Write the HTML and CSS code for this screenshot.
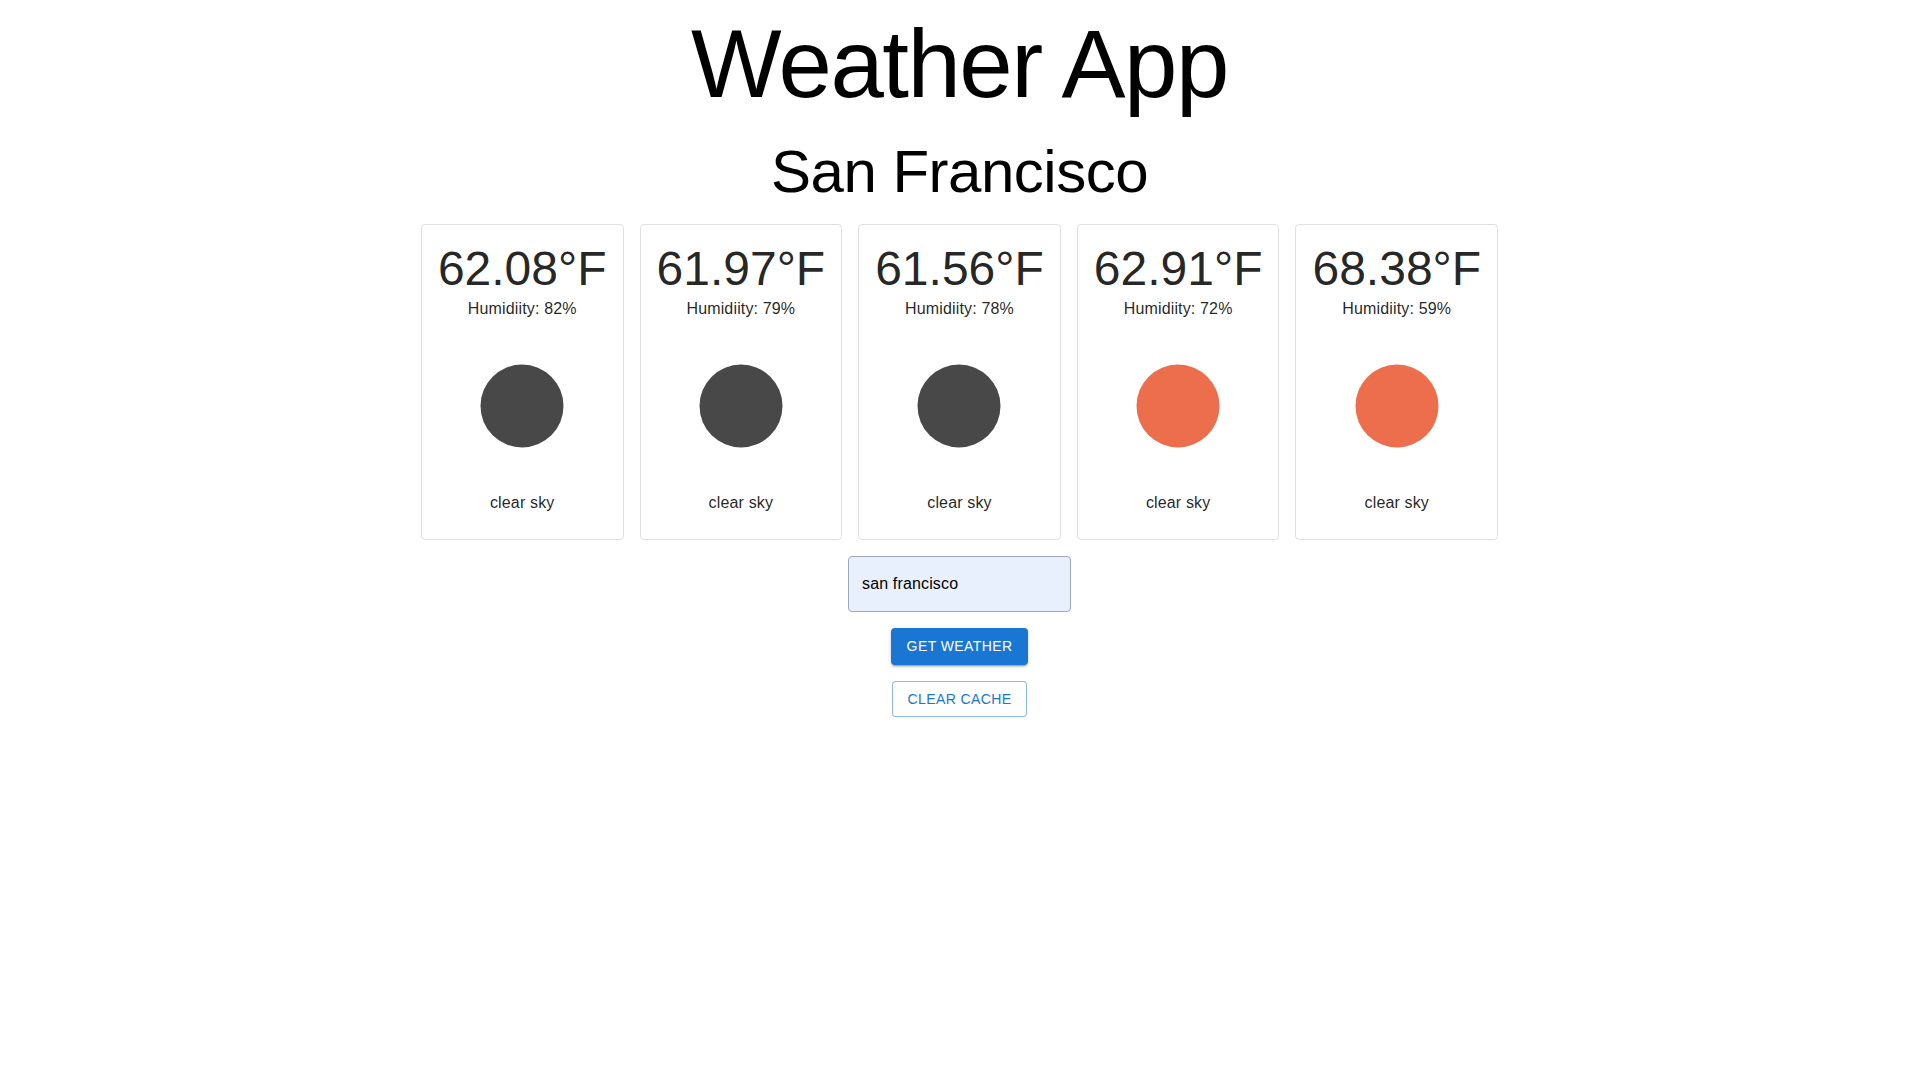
FILE: index.html
```html
<!DOCTYPE html>
<html lang="en">
<head>
<meta charset="utf-8">
<title>Weather App</title>
<link rel="stylesheet" href="styles.css">
</head>
<body>
<main class="app">
  <h1 class="title">Weather App</h1>
  <h2 class="city">San Francisco</h2>
  <section class="cards">
    <article class="card"><div class="temp">62.08°F</div><p class="text">Humidiity: 82%</p><svg class="icon night" viewBox="0 0 200 200"><circle cx="100" cy="100" r="83"/></svg><p class="text">clear sky</p></article>
    <article class="card"><div class="temp">61.97°F</div><p class="text">Humidiity: 79%</p><svg class="icon night" viewBox="0 0 200 200"><circle cx="100" cy="100" r="83"/></svg><p class="text">clear sky</p></article>
    <article class="card"><div class="temp">61.56°F</div><p class="text">Humidiity: 78%</p><svg class="icon night" viewBox="0 0 200 200"><circle cx="100" cy="100" r="83"/></svg><p class="text">clear sky</p></article>
    <article class="card"><div class="temp">62.91°F</div><p class="text">Humidiity: 72%</p><svg class="icon day" viewBox="0 0 200 200"><circle cx="100" cy="100" r="83"/></svg><p class="text">clear sky</p></article>
    <article class="card"><div class="temp">68.38°F</div><p class="text">Humidiity: 59%</p><svg class="icon day" viewBox="0 0 200 200"><circle cx="100" cy="100" r="83"/></svg><p class="text">clear sky</p></article>
  </section>
  <input class="field" type="text" value="san francisco" aria-label="City">
  <button class="button contained">Get Weather</button>
  <button class="button outlined">Clear Cache</button>
</main>
</body>
</html>
```
FILE: styles.css
```css
* { box-sizing: border-box; }
body { margin: 0; background: #fff; font-family: "Liberation Sans", Arial, sans-serif; color: #000; }
.app { display: flex; flex-direction: column; align-items: center; gap: 16px; padding-top: 8px; }
.title { margin: 0; font-size: 96px; font-weight: 400; line-height: 112px; letter-spacing: -1.5px; }
.city { margin: 0; font-size: 60px; font-weight: 400; line-height: 72px; letter-spacing: -0.5px; }
.cards { display: flex; gap: 16px; }
.card { display: flex; flex-direction: column; align-items: center; padding: 16px 16px 24px; border: 1px solid rgba(0,0,0,.12); border-radius: 4px; color: rgba(0,0,0,.87); }
.temp { font-size: 48px; line-height: 56px; }
.text { margin: 0; font-size: 16px; line-height: 24px; letter-spacing: .15px; }
.icon { width: 100px; height: 100px; margin: 35px 0; }
.night circle { fill: #484849; }
.day circle { fill: #ec6e4c; }
.field { width: 223px; height: 56px; padding: 0 13px; border: 1px solid #a0a8b8; border-radius: 4px; background: #e8f0fe; font: 16px "Liberation Sans", Arial, sans-serif; letter-spacing: .15px; }
.button { font: 500 14px/24.5px "Liberation Sans", Arial, sans-serif; letter-spacing: .4px; text-transform: uppercase; border-radius: 4px; }
.contained { padding: 6px 16px; border: 0; color: #fff; background: #1976d2; box-shadow: 0 3px 1px -2px rgba(0,0,0,.2), 0 2px 2px rgba(0,0,0,.14), 0 1px 5px rgba(0,0,0,.12); }
.outlined { padding: 5px 15px; border: 1px solid rgba(25,118,210,.5); color: #1976d2; background: #fff; }
```
